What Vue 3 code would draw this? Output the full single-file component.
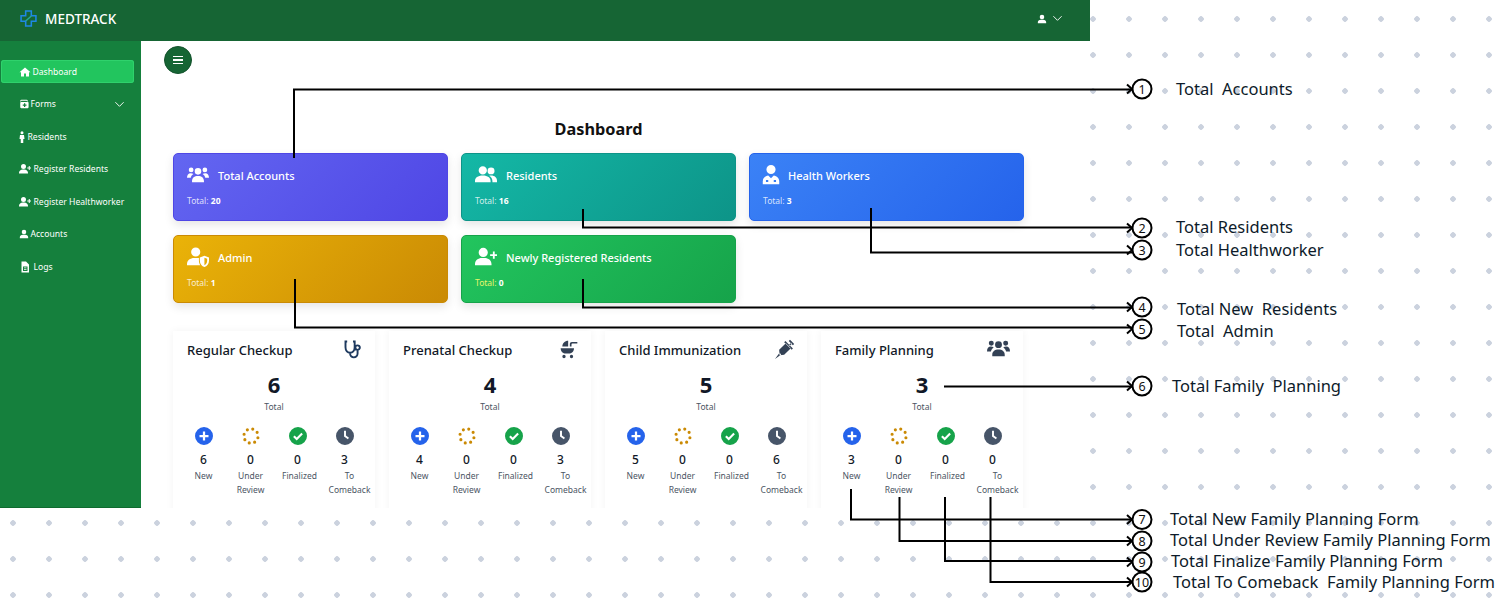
<script setup>
function circle(cx, cy, r) {
  return `M${cx - r} ${cy}a${r} ${r} 0 1 0 ${2 * r} 0a${r} ${r} 0 1 0 ${-2 * r} 0z`
}

function spinner() {
  let d = ""
  for (let i = 0; i < 8; i++) {
    const a = (i / 8) * Math.PI * 2 + 0.25
    d += circle(+(12 + 9.5 * Math.cos(a)).toFixed(2), +(12 + 9.5 * Math.sin(a)).toFixed(2), 2.1)
  }
  return d
}

const icons = {
  home: "M12 3L1 12.5h3V21h6v-6h4v6h6v-8.5h3z",
  forms: "M6 2h12a3 3 0 0 1 3 3v1h-2V5a1 1 0 0 0-1-1H6a1 1 0 0 0-1 1v1H3V5a3 3 0 0 1 3-3zM5 7h16a2 2 0 0 1 2 2v11a2 2 0 0 1-2 2H5a2 2 0 0 1-2-2V9a2 2 0 0 1 2-2zM12 10v3H9v3h3v3h3v-3h3v-3h-3v-3z",
  person: circle(12, 3.5, 3) + "M8 8h8l1 8h-2.5v8h-5v-8H7z",
  user: circle(12, 7, 5.5) + "M2 22v-2c0-4 3-6.5 7-6.5h6c4 0 7 2.5 7 6.5v2z",
  file: "M5 1h9l6 6v16H5zM8 11v9h9v-9zM10 13h5v1.5h-5zM10 16h5v1.5h-5z",
  users: circle(12, 8, 3.6) + "M5.5 20v-1.5C5.5 15 8 13 12 13s6.5 2 6.5 5.5V20z" + circle(4.5, 6.5, 2.6) + circle(19.5, 6.5, 2.6) + "M0 15c0-3 1.5-5 4-5 1.2 0 2.2.3 3 1-1.5 1-2.5 2.3-2.9 4zM24 15c0-3-1.5-5-4-5-1.2 0-2.2.3-3 1 1.5 1 2.5 2.3 2.9 4z",
  two: circle(8.5, 7, 4.5) + "M0 20v-1.5C0 15 3 12.5 8.5 12.5S17 15 17 18.5V20z" + circle(17.5, 7.5, 3.8) + "M15.5 12.7c.7-.2 1.3-.2 2-.2 4 0 6.500 2.500 6.500 5.500v2h-5v-1.500c0-2.300-1.300-4.500-3.500-5.800z",
  doctor: circle(12, 6, 5) + "M3 22v-3c0-3.500 2.500-6 6-6.500l3 3 3-3c3.500.5 6 3 6 6.500v3zM6.500 17.500v2h2.500v-2zM15 17.500v2h2.500v-2z",
  shield: circle(9.5, 6.5, 5) + "M0 21v-1.500C0 15.500 3.500 13 8 13h3c.7 0 1.300.1 2 .2v3c0 1.800.6 3.500 1.500 4.800zM19 10.500l5 2v3.500c0 3.300-2.200 5.800-5 7-2.800-1.200-5-3.700-5-7v-3.500zM19 12.700V21c1.700-.8 3-2.600 3-5v-2z",
  userPlus: circle(9, 7, 5) + "M0 21v-1.500C0 15.500 3.500 13 7.500 13h3c4 0 7.500 2.500 7.500 6.500V21zM19.500 6h2v3h2.500v2h-2.500v3h-2v-3h-3V9h3z",
  stetho: "M5 3H3v7c0 4 2.500 6.500 5.500 6.500S14 14 14 10V3h-2M8.500 16.500v1c0 2.500 2 4.500 4.500 4.500s4.500-2 4.500-4.500V13M17.500 13a2.700 2.700 0 1 0 0-5.400 2.700 2.700 0 0 0 0 5.400z",
  pram: "M4 9C4 5 7 2 11 2v7zM2 11h16c0 4-3 6.500-6 6.500H8C5 17.500 2 15 2 11zM13 9V6c0-1.500 1-2.500 2.500-2.500H22v2h-6c-.5 0-1 .5-1 1V9z" + circle(6, 21, 2) + circle(15, 21, 2),
  syringe: "M0 24l5.500-7.500 2 2zM5 13L13 5l6 6-8 8-5.500.5zM12.500 2.500l9 9-1.500 1.500-9-9zM16.500 7.500l3-3 1 1-3 3zM18 1l5 5-1.500 1.500-5-5z",
  plus: circle(12, 12, 12) + "M10.500 6h3v4.500H18v3h-4.500V18h-3v-4.500H6v-3h4.500z",
  spinner: spinner(),
  check: circle(12, 12, 12) + "M10.300 18L5.500 13.200l2-2 2.800 2.800 6.200-6.200 2 2z",
  clock: circle(12, 12, 12) + "M10.700 5h2.600v6.300l4 3-1.500 2-5.100-3.800z",
}

const nav = [
  { label: "Dashboard", icon: "home", tune: "nav-home", active: true },
  { label: "Forms", icon: "forms", tune: "nav-forms", chevron: true },
  { label: "Residents", icon: "person", tune: "nav-person" },
  { label: "Register Residents", icon: "userPlus", tune: "" },
  { label: "Register Healthworker", icon: "userPlus", tune: "" },
  { label: "Accounts", icon: "user", tune: "nav-user" },
  { label: "Logs", icon: "file", tune: "" },
]

const summary = [
  { title: "Total Accounts", total: 20, icon: "users", tone: "indigo" },
  { title: "Residents", total: 16, icon: "two", tone: "teal" },
  { title: "Health Workers", total: 3, icon: "doctor", tone: "blue" },
  { title: "Admin", total: 1, icon: "shield", tone: "amber" },
  { title: "Newly Registered Residents", total: 0, icon: "userPlus", tone: "green" },
]

const forms = [
  { title: "Regular Checkup", total: 6, icon: "stetho", counts: [6, 0, 0, 3] },
  { title: "Prenatal Checkup", total: 4, icon: "pram", counts: [4, 0, 0, 3] },
  { title: "Child Immunization", total: 5, icon: "syringe", counts: [5, 0, 0, 6] },
  { title: "Family Planning", total: 3, icon: "users", counts: [3, 0, 0, 0] },
]

const statuses = [
  { label: "New", icon: "plus", color: "#2563eb" },
  { label: "Under Review", icon: "spinner", color: "#ca8a04" },
  { label: "Finalized", icon: "check", color: "#16a34a" },
  { label: "To Comeback", icon: "clock", color: "#475569" },
]

const notes = [
  { n: 1, cy: 89, tx: 1176, ty: 95, text: "Total  Accounts", d: "M294 158V89.500H1132" },
  { n: 2, cy: 228, tx: 1176, ty: 233, text: "Total Residents", d: "M583 209V227.500H1132" },
  { n: 3, cy: 250, tx: 1176, ty: 256, text: "Total Healthworker", d: "M871 208V252.500H1132" },
  { n: 4, cy: 307, tx: 1177, ty: 315, text: "Total New  Residents", d: "M583 279V307.500H1132" },
  { n: 5, cy: 329, tx: 1177, ty: 337, text: "Total  Admin", d: "M295 279V327.500H1132" },
  { n: 6, cy: 386, tx: 1172, ty: 392, text: "Total Family  Planning", d: "M944 386.500H1132" },
  { n: 7, cy: 519.5, tx: 1170, ty: 525, text: "Total New Family Planning Form", d: "M851 489V519.500H1132" },
  { n: 8, cy: 541, tx: 1170, ty: 546, text: "Total Under Review Family Planning Form", d: "M899.500 497V541H1132" },
  { n: 9, cy: 562, tx: 1171, ty: 567, text: "Total Finalize Family Planning Form", d: "M945 497V561H1132" },
  { n: 10, cy: 582, tx: 1173, ty: 588, text: "Total To Comeback  Family Planning Form", d: "M990.500 497V582H1132" },
]
</script>

<template>
  <div class="canvas">
    <div class="app">
      <header class="topbar">
        <div class="brand">
          <svg class="logo" viewBox="0 0 24 24">
            <path d="M8 1.500h8v6.500h6.500v8H16v6.500H8V16H1.500V8H8z" fill="none" stroke="#1e88e5" stroke-width="2.200" />
            <path d="M8 15.500L16 8.500" fill="none" stroke="#26a69a" stroke-width="2.200" />
          </svg>
          <span>MEDTRACK</span>
        </div>
        <div class="account">
          <svg class="account-icon" viewBox="0 0 24 24"><path :d="icons.user" /></svg>
          <svg class="chevron" viewBox="0 0 24 24"><path d="M3 7l9 9 9-9" /></svg>
        </div>
      </header>

      <div class="body">
        <aside class="sidebar">
          <a
            v-for="item in nav"
            :key="item.label"
            class="nav-item"
            :class="[item.tune, { active: item.active }]"
          >
            <svg class="nav-icon" viewBox="0 0 24 24"><path :d="icons[item.icon]" fill-rule="evenodd" /></svg>
            <span>{{ item.label }}</span>
            <svg v-if="item.chevron" class="chevron nav-chevron" viewBox="0 0 24 24"><path d="M3 7l9 9 9-9" /></svg>
          </a>
        </aside>

        <main class="content">
          <button class="toggle">
            <span></span><span></span><span></span>
          </button>
          <h1>Dashboard</h1>

          <section class="summary">
            <div v-for="card in summary" :key="card.title" class="summary-card" :class="card.tone">
              <div class="summary-head">
                <svg class="summary-icon" viewBox="0 0 24 24"><path :d="icons[card.icon]" fill-rule="evenodd" /></svg>
                <span>{{ card.title }}</span>
              </div>
              <div class="summary-total">Total: <b>{{ card.total }}</b></div>
            </div>
          </section>

          <section class="forms">
            <div v-for="form in forms" :key="form.title" class="form-card">
              <div class="form-head">
                <span>{{ form.title }}</span>
                <svg
                  class="form-icon"
                  :class="{ line: form.icon === 'stetho', group: form.icon === 'users' }"
                  viewBox="0 0 24 24"
                ><path :d="icons[form.icon]" fill-rule="evenodd" /></svg>
              </div>
              <div class="form-total">{{ form.total }}</div>
              <div class="form-caption">Total</div>
              <div class="status-row">
                <div v-for="(status, i) in statuses" :key="status.label" class="status">
                  <svg class="status-icon" viewBox="0 0 24 24" :style="{ fill: status.color }">
                    <path :d="icons[status.icon]" fill-rule="evenodd" />
                  </svg>
                  <div class="status-count">{{ form.counts[i] }}</div>
                  <div class="status-label">{{ status.label }}</div>
                </div>
              </div>
            </div>
          </section>
        </main>
      </div>
    </div>

    <svg class="notes" viewBox="0 0 1506 605">
      <g v-for="note in notes" :key="note.n">
        <path :d="note.d" class="wire" />
        <path :d="`M1127 ${note.cy - 4.500}L1132 ${note.cy}L1127 ${note.cy + 4.500}`" class="wire" />
        <circle cx="1142" :cy="note.cy" r="9.500" class="bubble" />
        <text x="1142" :y="note.cy + 4.500" class="bubble-text">{{ note.n }}</text>
        <text :x="note.tx" :y="note.ty" class="note-text">{{ note.text }}</text>
      </g>
    </svg>
  </div>
</template>

<style>
html,
body {
  margin: 0;
  background: #fff;
}
</style>

<style scoped>
.canvas {
  position: relative;
  width: 1506px;
  height: 605px;
  overflow: hidden;
  font-family: "Noto Sans", "Open Sans", sans-serif;
  background-color: #fff;
  background-image: radial-gradient(circle, #cbd2de 2.500px, transparent 3px);
  background-size: 36px 36px;
  background-position: -5px 1px;
}

.app {
  width: 1090px;
  height: 508px;
  display: flex;
  flex-direction: column;
  background: #fff;
  overflow: hidden;
}

.topbar {
  height: 41px;
  flex: none;
  box-sizing: border-box;
  display: flex;
  align-items: center;
  justify-content: space-between;
  padding: 0 27px 4px 20px;
  background: #166534;
  color: #fff;
}

.brand {
  display: flex;
  align-items: center;
  gap: 8px;
  font-size: 13.500px;
  font-weight: 500;
}

.logo {
  width: 17px;
  height: 17px;
}

.account {
  display: flex;
  align-items: center;
  gap: 5px;
}

.account-icon {
  width: 10px;
  height: 10px;
  fill: #fff;
}

.chevron {
  width: 11px;
  height: 11px;
  fill: none;
  stroke: #fff;
  stroke-width: 2;
}

.body {
  flex: 1;
  display: flex;
  min-height: 0;
}

.sidebar {
  width: 141px;
  flex: none;
  box-sizing: border-box;
  padding: 19px 7px 0 1px;
  background: #15803d;
  border-bottom: 1px solid #0f6b2f;
  display: flex;
  flex-direction: column;
  gap: 9.500px;
}

.nav-item {
  height: 23px;
  flex: none;
  display: flex;
  align-items: center;
  gap: 3px;
  padding: 0 9px 0 17.500px;
  border-radius: 3px;
  color: #fff;
  font-size: 8.600px;
  white-space: nowrap;
}

.nav-item.active {
  background: #22c55e;
  box-shadow: inset 0 0 0 1px #2fd26c;
}

.nav-icon {
  width: 12px;
  height: 12px;
  flex: none;
  fill: #fff;
}

.nav-home {
  gap: 2px;
}

.nav-forms {
  gap: 2px;
}

.nav-forms .nav-icon {
  width: 10px;
  height: 10px;
}

.nav-person {
  gap: 0;
}

.nav-person .nav-icon {
  margin-left: -3px;
}

.nav-user {
  gap: 2px;
}

.nav-user .nav-icon {
  width: 10px;
  height: 10px;
}

.nav-chevron {
  margin-left: auto;
}

.content {
  flex: 1;
  padding: 5px 66px 0 32px;
  overflow: hidden;
}

.toggle {
  width: 28px;
  height: 28px;
  margin-left: -9px;
  padding: 0;
  display: flex;
  flex-direction: column;
  align-items: center;
  justify-content: center;
  gap: 2px;
  border: 1px solid #14532d;
  border-radius: 50%;
  background: #166534;
}

.toggle span {
  width: 10px;
  height: 1.500px;
  background: #fff;
}

h1 {
  margin: 44px 0 13px;
  text-align: center;
  font-size: 16.300px;
  line-height: 22px;
  font-weight: 700;
  color: #111;
}

.summary {
  display: grid;
  grid-template-columns: repeat(3, 275px);
  grid-auto-rows: 68px;
  column-gap: 13px;
  row-gap: 14px;
}

.summary-card {
  box-sizing: border-box;
  padding: 10px 13px;
  border-radius: 5px;
  border: 1px solid;
  color: #fff;
  box-shadow: 0 4px 10px rgba(0, 0, 0, 0.1);
}

.indigo {
  background: linear-gradient(135deg, #6366f1, #4f46e5);
  border-color: #4f46e5;
}

.teal {
  background: linear-gradient(135deg, #14b8a6, #0d9488);
  border-color: #0d9488;
}

.blue {
  background: linear-gradient(135deg, #3b82f6, #2563eb);
  border-color: #2563eb;
}

.amber {
  background: linear-gradient(135deg, #eab308, #ca8a04);
  border-color: #ca8a04;
}

.green {
  background: linear-gradient(135deg, #22c55e, #16a34a);
  border-color: #16a34a;
}

.summary-head {
  display: flex;
  align-items: center;
  gap: 9px;
  height: 22px;
  font-size: 11px;
  font-weight: 500;
}

.summary-icon {
  width: 22px;
  height: 22px;
  fill: #fff;
}

.blue .summary-icon {
  margin: 0 -3px;
}

.summary-total {
  margin-top: 8px;
  font-size: 8.500px;
  line-height: 14px;
  color: rgba(255, 255, 255, 0.8);
}

.summary-total b {
  color: #fff;
}

.green .summary-total {
  color: #e6f56a;
}

.forms {
  display: grid;
  grid-template-columns: repeat(4, 202px);
  column-gap: 14px;
  margin-top: 28px;
}

.form-card {
  box-sizing: border-box;
  height: 200px;
  padding: 9px 14px 0;
  background: #fff;
  box-shadow: 0 0 8px rgba(0, 0, 0, 0.05);
}

.form-head {
  display: flex;
  align-items: center;
  justify-content: space-between;
  height: 20px;
  font-size: 13px;
  font-weight: 500;
  color: #111827;
}

.form-icon {
  width: 20px;
  height: 20px;
  margin: -3px -2px 0 0;
  fill: #334155;
}

.form-icon.group {
  width: 23px;
  height: 23px;
  margin-right: -1px;
}

.form-icon.line {
  fill: none;
  stroke: #1e3a5f;
  stroke-width: 2.300;
}

.form-total {
  margin-top: 10px;
  text-align: center;
  font-size: 22px;
  line-height: 28px;
  font-weight: 700;
  color: #111827;
}

.form-caption {
  margin-top: 2px;
  text-align: center;
  font-size: 8.500px;
  line-height: 14px;
  color: #4b5563;
}

.status-row {
  display: grid;
  grid-template-columns: repeat(4, 47px);
  margin: 13px 0 0 -7px;
}

.status {
  text-align: center;
}

.status-icon {
  width: 18px;
  height: 18px;
  display: block;
  margin: 0 auto;
}

.status-count {
  margin-top: 7px;
  font-size: 12px;
  line-height: 16px;
  font-weight: 500;
  color: #111827;
}

.status-label {
  width: min-content;
  margin: 1px auto 0;
  font-size: 8.500px;
  line-height: 14px;
  color: #4b5563;
}

.status:nth-child(3) .status-label {
  transform: translateX(2px);
}

.status:nth-child(4) .status-label {
  transform: translateX(5px);
}

.notes {
  position: absolute;
  inset: 0;
  width: 1506px;
  height: 605px;
  pointer-events: none;
}

.wire {
  fill: none;
  stroke: #000;
  stroke-width: 2;
}

.bubble {
  fill: #fff;
  stroke: #000;
  stroke-width: 2;
}

.bubble-text {
  text-anchor: middle;
  font-size: 12.500px;
  fill: #111;
}

.note-text {
  font-size: 16.500px;
  fill: #0d1b2a;
  white-space: pre;
}
</style>
